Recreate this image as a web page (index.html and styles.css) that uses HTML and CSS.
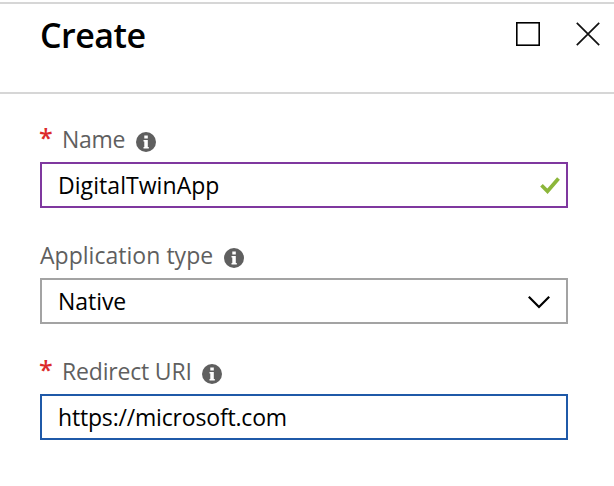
FILE: index.html
```html
<!DOCTYPE html>
<html lang="en">
<head>
<meta charset="utf-8">
<title>Create</title>
<link rel="stylesheet" href="styles.css">
</head>
<body>
<svg width="0" height="0" class="defs"><symbol id="info" viewBox="0 0 20 20"><circle cx="10" cy="10" r="10" fill="#5f5f5f"/><path d="M8.300 3.500h3.500v3H8.300zM7.500 8h4.300v7h1v1.500H7.500V15h.8V9.500h-.8z" fill="#fff"/></symbol></svg>
<header class="header">
  <h1>Create</h1>
  <div class="actions">
    <svg width="24" height="24" viewBox="0 0 24 24"><rect x=".8" y=".8" width="22.400" height="22.400" fill="none" stroke="#000" stroke-width="1.6"/></svg>
    <svg width="24" height="24" viewBox="0 0 24 24"><path d="M.8.8l22.400 22.400M23.200.8L.8 23.200" stroke="#111" stroke-width="1.7"/></svg>
  </div>
</header>
<main class="form">
  <div class="field">
    <div class="label"><span class="req">*</span><span class="name">Name</span><svg class="info"><use href="#info"/></svg></div>
    <div class="box valid"><span class="app">DigitalTwinApp</span><svg class="check" width="20" height="17" viewBox="0 0 20 17"><path d="M1.500 8.300l6 6L18.500 1.500" fill="none" stroke="#8cb63a" stroke-width="3.700"/></svg></div>
  </div>
  <div class="field">
    <div class="label"><span class="type">Application type</span><svg class="info"><use href="#info"/></svg></div>
    <div class="box"><span class="native">Native</span><svg class="chevron" width="22" height="13" viewBox="0 0 22 13"><path d="M.8.8L11 11 21.200.8" fill="none" stroke="#000" stroke-width="2.200"/></svg></div>
  </div>
  <div class="field">
    <div class="label"><span class="req">*</span><span class="uri">Redirect URI</span><svg class="info"><use href="#info"/></svg></div>
    <div class="box focus"><span class="url">https://microsoft.com</span></div>
  </div>
</main>
</body>
</html>
```
FILE: styles.css
```css
* { box-sizing: border-box; }
body { margin: 0; background: #fff; color: #000; font-family: "Open Sans", "Noto Sans", sans-serif; overflow: hidden; }
.defs { display: block; position: absolute; }
.header { height: 92px; border-top: 2px solid #d6d6d6; border-bottom: 2px solid #d6d6d6; padding: 6px 14px 0 40px; margin-top: 2px; display: flex; justify-content: space-between; align-items: flex-start; }
h1 { margin: 0; font-size: 34px; line-height: 50px; font-weight: 600; letter-spacing: -0.5px; }
.actions { display: flex; gap: 36px; padding-top: 12px; }
.form { padding: 29px 46px 0 40px; }
.field { height: 116px; }
.label { display: flex; height: 39px; line-height: 33px; font-size: 23px; color: #5f5f5f; letter-spacing: -0.3px; }
.req { color: #dc2b2b; width: 22px; margin-left: -1px; margin-right: 1px; font-size: 25px; font-weight: 600; line-height: 28px; }
.info { width: 20px; height: 20px; margin: 9px 0 0 11px; }
.type { letter-spacing: 0.03px; }
.uri { letter-spacing: -0.18px; margin-right: -1px; }
.box { height: 46px; border: 2px solid #a3a3a3; padding: 0 6px 0 16px; display: flex; align-items: center; justify-content: space-between; font-size: 23px; }
.app { letter-spacing: 0.06px; }
.native { letter-spacing: -0.05px; }
.url { letter-spacing: -0.18px; }
.valid { border-color: #7f389f; }
.focus { border-color: #1f59a8; }
.chevron { margin: 2px 10px 0 0; }
```
